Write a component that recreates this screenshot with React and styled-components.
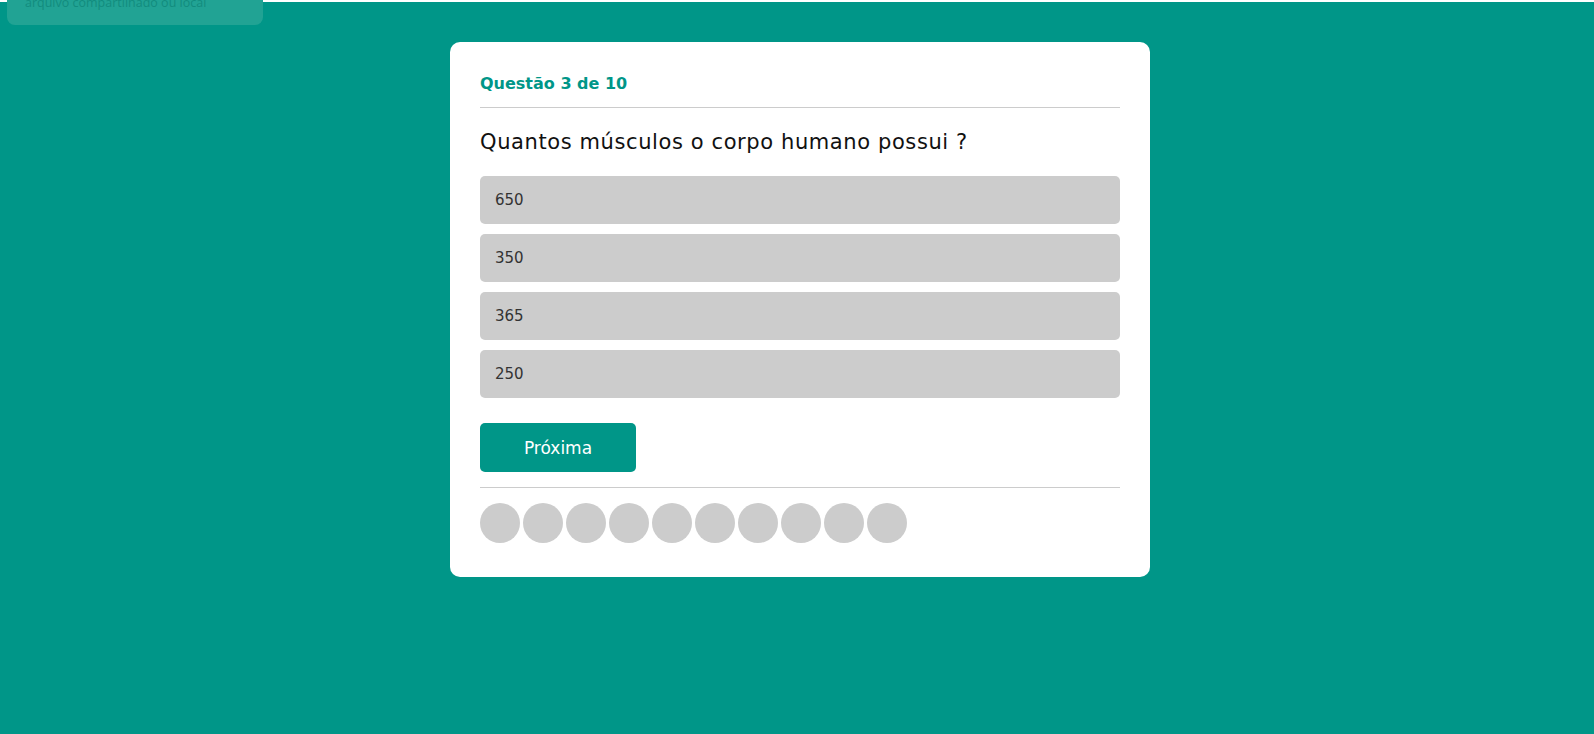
import React from 'react'
import styled, { createGlobalStyle } from 'styled-components'

const GlobalStyle = createGlobalStyle`
  html, body {
    margin: 0;
    padding: 0;
    height: 100%;
  }
  body {
    background: #009688;
    font-family: 'DejaVu Sans', 'Open Sans', sans-serif;
    border-top: 2px solid #ffffff;
    box-sizing: border-box;
    overflow: hidden;
  }
`

const options = ['650', '350', '365', '250']

export default function App() {
  return (
    <>
      <GlobalStyle />
      <Toast>arquivo compartilhado ou local</Toast>
      <Page>
        <Card>
          <Header>Questão 3 de 10</Header>
          <Question>Quantos músculos o corpo humano possui ?</Question>
          <Options>
            {options.map((o) => (
              <Option key={o}>{o}</Option>
            ))}
          </Options>
          <NextButton>Próxima</NextButton>
          <Divider />
          <Dots>
            {Array.from({ length: 10 }).map((_, i) => (
              <Dot key={i} />
            ))}
          </Dots>
        </Card>
      </Page>
    </>
  )
}

const Page = styled.div`
  display: flex;
  justify-content: center;
  padding-top: 40px;
  padding-left: 6px;
`

const Toast = styled.div`
  position: fixed;
  top: -12px;
  left: 7px;
  width: 256px;
  height: 37px;
  padding: 0 18px 16px;
  display: flex;
  align-items: flex-end;
  box-sizing: border-box;
  border-radius: 8px;
  background: #21a394;
  color: #128c7e;
  font-size: 12.5px;
  font-family: 'Open Sans', sans-serif;
  line-height: 1;
`

const Card = styled.div`
  width: 700px;
  box-sizing: border-box;
  background: #ffffff;
  border-radius: 10px;
  padding: 30px 30px 34px;
  display: flex;
  flex-direction: column;
`

const Header = styled.div`
  color: #009688;
  font-size: 16px;
  font-weight: bold;
  line-height: 24px;
  padding-bottom: 11px;
  border-bottom: 1px solid #cccccc;
`

const Question = styled.div`
  margin: 20px 0;
  font-size: 21px;
  letter-spacing: 0.6px;
  line-height: 28px;
  color: #111111;
`

const Options = styled.div`
  display: flex;
  flex-direction: column;
  gap: 10px;
`

const Option = styled.div`
  height: 48px;
  display: flex;
  align-items: center;
  padding: 0 15px;
  background: #cccccc;
  border-radius: 5px;
  font-size: 15px;
  color: #333333;
`

const NextButton = styled.button`
  margin-top: 25px;
  width: 156px;
  height: 49px;
  border: none;
  border-radius: 5px;
  background: #009688;
  color: #ffffff;
  font-family: inherit;
  font-size: 17px;
  cursor: pointer;
`

const Divider = styled.div`
  height: 1px;
  background: #cccccc;
  margin: 15px 0;
`

const Dots = styled.div`
  display: flex;
  gap: 3px;
`

const Dot = styled.div`
  width: 40px;
  height: 40px;
  border-radius: 50%;
  background: #cccccc;
`
